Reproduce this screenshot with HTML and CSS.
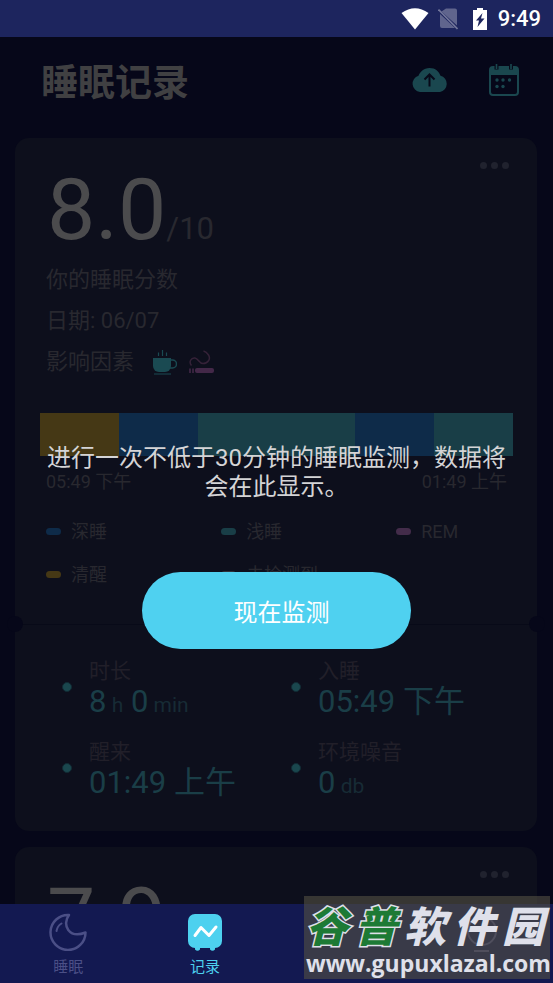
FILE: index.html
```html
<!DOCTYPE html>
<html lang="zh-CN">
<head>
<meta charset="utf-8">
<meta name="viewport" content="width=device-width, initial-scale=1">
<title>睡眠记录</title>
<link rel="stylesheet" href="styles.css">
</head>
<body>
<div class="status">
  <svg class="status-wifi" width="28" height="22" viewBox="0 0 28 22"><path d="M.5 5Q14-4.500 27.500 5L14 21.500Z" fill="#fff"/></svg>
  <svg class="status-sim" width="20" height="24" viewBox="0 0 20 24"><path d="M8 1.500h9a2 2 0 0 1 2 2v15L3.500 4.500zM2 7l15 14H4a2 2 0 0 1-2-2z" fill="#60658d"/><path d="M.5 2.500 19.500 22" stroke="#73779b" stroke-width="1.600"/></svg>
  <svg class="status-battery" width="16" height="24" viewBox="0 0 16 24"><path d="M5 1h6v2h4v20H1V3h4z" fill="#fff"/><path d="M10.500 6 4 13.500h3L5.500 20 12.500 11.500h-3.500z" fill="#1d255e"/></svg>
  <span>9:49</span>
</div>

<main class="screen">
  <header class="header">
    <h1>睡眠记录</h1>
    <button class="icon-button" aria-label="上传">
      <svg width="38" height="26" viewBox="0 0 38 26"><path d="M9 25a8.300 8.300 0 0 1-1.500-16.200C9 5 12.500 1 18.500 1c6 0 9.500 3.500 11 7.800A8.300 8.300 0 0 1 29 25z" fill="#1a474f"/><path d="M18.500 19.500V8M13.500 12.500l5-5 5 5" fill="none" stroke="#070919" stroke-width="2"/></svg>
    </button>
    <button class="icon-button" aria-label="日历">
      <svg width="30" height="32" viewBox="0 0 30 32"><rect x="1" y="3" width="28" height="28" rx="3" fill="none" stroke="#1a474f" stroke-width="2"/><path d="M1 5a2 2 0 0 1 2-2h24a2 2 0 0 1 2 2v6H1z" fill="#1a474f"/><path d="M7.500 0v5.500M22 0v5.500" stroke="#070919" stroke-width="4"/><path d="M7.500 0v5M22 0v5" stroke="#1a474f" stroke-width="1.600"/><g fill="#1a474f"><circle cx="8" cy="16" r="1.700"/><circle cx="14" cy="16" r="1.700"/><circle cx="20.500" cy="16" r="1.700"/><circle cx="8" cy="22.500" r="1.700"/><circle cx="14" cy="22.500" r="1.700"/></g></svg>
    </button>
  </header>

  <article class="card">
    <button class="more" aria-label="更多"><i></i><i></i><i></i></button>
    <section class="summary">
      <p class="score">8.0<small>/10</small></p>
      <p class="line">你的睡眠分数</p>
      <p class="line">日期: 06/07</p>
      <p class="line factors">影响因素
        <svg width="25" height="26" viewBox="0 0 25 26"><path d="M1 9h18v8a6 6 0 0 1-6 6H7a6 6 0 0 1-6-6z" fill="#1a4a52"/><path d="M19 11h1.500a3.500 3.500 0 0 1 0 8H18" fill="none" stroke="#1a4a52" stroke-width="1.500"/><path d="M2 25h17M6.500 7V3.500M10.500 7V1M14.500 7V3.500" stroke="#1a4a52" stroke-width="1.200"/></svg>
        <svg width="25" height="24" viewBox="0 0 25 24"><path d="M2.500 15.500C-.5 12 2 7.500 6 8c3.500.5 4 5.500 8 5.500 5 0 8-4.500 5.500-8.500C18 2.500 17 1.500 14.500 1" fill="none" stroke="#352238" stroke-width="1.500"/><path d="M1 18.500v4.500M4 18.500v4.500" stroke="#452a4a" stroke-width="1.500"/><rect x="6" y="18" width="19" height="5" rx="2" fill="#432848"/></svg>
      </p>
      <div class="stages"><i class="awake"></i><i class="deep"></i><i class="light wide"></i><i class="deep"></i><i class="light"></i></div>
      <div class="range"><span>05:49 下午</span><span>01:49 上午</span></div>
      <ul class="legend">
        <li><i class="deep"></i>深睡</li>
        <li><i class="light"></i>浅睡</li>
        <li><i class="rem"></i>REM</li>
        <li><i class="awake"></i>清醒</li>
        <li><i class="none"></i>未检测到</li>
      </ul>
    </section>
    <dl class="details">
      <div><dt>时长</dt><dd>8<small> h</small> 0<small> min</small></dd></div>
      <div><dt>入睡</dt><dd>05:49 下午</dd></div>
      <div><dt>醒来</dt><dd>01:49 上午</dd></div>
      <div><dt>环境噪音</dt><dd>0<small> db</small></dd></div>
    </dl>
  </article>

  <article class="card">
    <button class="more" aria-label="更多"><i></i><i></i><i></i></button>
    <section class="summary">
      <p class="score">7.9</p>
    </section>
  </article>

  <div class="prompt">
    <p>进行一次不低于30分钟的睡眠监测，数据将会在此显示。</p>
    <button class="start">现在监测</button>
  </div>
</main>

<nav class="tabs">
  <a href="#sleep">
    <svg width="38" height="38" viewBox="0 0 38 38" fill="none" stroke="#4b4f86" stroke-width="2.500" stroke-linecap="round" stroke-linejoin="round"><path d="M20 2C12.500 12 20 26 36.500 19.500A17.500 17.500 0 1 1 20 2z"/><path d="M7.500 18q.8-5 5-7.500" stroke-width="2"/></svg>
    睡眠
  </a>
  <a href="#records" class="current">
    <svg width="38" height="38" viewBox="0 0 38 38"><path d="M9 1h20a7 7 0 0 1 7 7v20a7 7 0 0 1-7 7v1.500q-2.500 2.500-5 0V35H14v1.500q-2.500 2.500-5 0V35a7 7 0 0 1-7-7V8a7 7 0 0 1 7-7z" fill="#4dd1ef"/><path d="m9 22.500 6-8 8 8 7-8.500" fill="none" stroke="#fff" stroke-width="3" stroke-linecap="round" stroke-linejoin="round"/></svg>
    记录
  </a>
  <a href="#discover" aria-label="发现"></a>
  <a href="#profile" aria-label="我的">
    <svg width="38" height="40" viewBox="0 0 38 40" fill="none" stroke="#4b4f86" stroke-width="2"><circle cx="22" cy="18" r="14"/><path d="M14 38h15"/></svg>
  </a>
</nav>

<div class="badge">
  <div class="badge-name"><b>谷</b><b>普</b><span>软</span><span>件</span><span>园</span></div>
  <div class="badge-url">www.gupuxlazal.com</div>
</div>
</body>
</html>
```
FILE: styles.css
```css
* { box-sizing: border-box; margin: 0; padding: 0; }
body {
  position: relative;
  display: flex;
  flex-direction: column;
  height: 100vh;
  overflow: hidden;
  background: #060719;
  color: #28282f;
  font-family: Roboto, "Noto Sans CJK SC", sans-serif;
}
button { border: 0; background: none; font: inherit; color: inherit; }
svg { display: block; flex: none; }
ul { list-style: none; }
small { font-weight: 400; line-height: 1; }

.status {
  flex: none;
  display: flex;
  align-items: center;
  justify-content: flex-end;
  height: 37px;
  padding-right: 12px;
  background: #1d255e;
  color: #fff;
  font-size: 22px;
  font-weight: 500;
}
.status-sim { margin: 0 14px 0 9px; }
.status-battery { margin-right: 10px; }

.screen { position: relative; flex: 1; min-height: 0; overflow: hidden; }
.header {
  display: flex;
  align-items: center;
  height: 86px;
  margin-bottom: 15px;
  padding: 0 34px 0 41px;
}
h1 { flex: 1; padding-top: 7px; font-size: 37px; line-height: 44px; color: #404042; }
.icon-button + .icon-button { margin-left: 40px; }

.card {
  position: relative;
  margin: 0 16px 16px 15px;
  border-radius: 14px;
  background: #0d0f1c;
}
.more { position: absolute; top: 24px; right: 28px; display: flex; gap: 4px; }
.more i { width: 7px; height: 7px; border-radius: 50%; background: #20222e; }

.summary {
  position: relative;
  padding: 28px 24px 28px 25px;
  border-bottom: 1px solid #080a18;
}
.summary::before,
.summary::after {
  content: "";
  position: absolute;
  bottom: -8px;
  width: 16px;
  height: 16px;
  border-radius: 50%;
  background: #060719;
}
.summary::before { left: -8px; }
.summary::after { right: -8px; }
.score { padding-left: 7px; font-size: 86px; line-height: 88px; margin-bottom: 5px; color: #4b4b4d; }
.score small { font-size: 31px; color: #28282f; }
.line { padding-left: 6px; font-size: 22px; line-height: 41px; }
.factors { display: flex; align-items: center; gap: 12px; }
.factors svg:first-of-type { margin-left: 6px; }

.stages { display: flex; height: 43px; margin-top: 31px; }
.stages i { flex: 1; }
.stages .wide { flex: 2; }
.deep { background: #0e2b49; }
.light { background: #193e47; }
.awake { background: #453815; }
.rem { background: #432c4a; }
.none { background: #303038; }
.range {
  display: flex;
  justify-content: space-between;
  padding: 14px 6px 0;
  font-size: 18px;
  line-height: 24px;
}
.legend {
  display: grid;
  grid-template-columns: 3fr 3fr 2fr;
  margin-top: 16px;
  padding-left: 6px;
  font-size: 18px;
  line-height: 43px;
}
.legend li { display: flex; align-items: center; gap: 10px; }
.legend i { width: 15px; height: 7px; border-radius: 4px; }

.details {
  display: grid;
  grid-template-columns: 1fr 1fr;
  row-gap: 19px;
  padding: 31px 17px 32px 47px;
}
.details div {
  display: grid;
  grid-template-columns: 8px 1fr;
  column-gap: 19px;
}
.details div::before {
  content: "";
  grid-row: 1 / 3;
  align-self: center;
  width: 8px;
  height: 8px;
  border: 1px solid #112b34;
  border-radius: 50%;
  background: #1a474e;
}
.details dt { font-size: 21px; line-height: 30px; color: #211f29; }
.details dd { grid-column: 2; font-size: 31px; line-height: 32px; color: #1a3e47; }
.details small { font-size: 21px; color: #172b35; }

.prompt {
  position: absolute;
  inset: 0;
  display: flex;
  flex-direction: column;
  align-items: center;
  padding: 407px 36px 0;
  text-align: center;
}
.prompt p { color: #d4d4d6; font-size: 24px; line-height: 29px; }
.start {
  width: 56%;
  max-width: 360px;
  height: 77px;
  margin-top: 70px;
  padding-left: 10px;
  border-radius: 39px;
  background: #4fd1f0;
  color: #fff;
  font-size: 24px;
}

.tabs {
  flex: none;
  display: flex;
  height: 79px;
  padding-right: 6px;
  background: #131951;
}
.tabs a {
  flex: 1;
  display: flex;
  flex-direction: column;
  align-items: center;
  gap: 5px;
  padding-top: 9px;
  color: #4b4f86;
  font-size: 15px;
  line-height: 22px;
  text-decoration: none;
}
.tabs .current { color: #4dd1ef; }

.badge {
  position: absolute;
  right: 3px;
  bottom: 4px;
  width: 246px;
  padding: 11px 6px 2px 2px;
  background: rgba(84, 80, 66, 0.6);
  color: #dfe0ea;
}
.badge-name {
  display: flex;
  justify-content: space-between;
  font-size: 42px;
  font-style: italic;
  font-weight: 900;
  line-height: 42px;
}
.badge-name b {
  color: #1d7a35;
  -webkit-text-stroke: 3px #dfe0ea;
  paint-order: stroke fill;
  font-weight: 900;
}
.badge-url {
  font-family: "Open Sans", sans-serif;
  font-size: 23px;
  font-weight: 700;
  line-height: 28px;
  white-space: nowrap;
}
```
